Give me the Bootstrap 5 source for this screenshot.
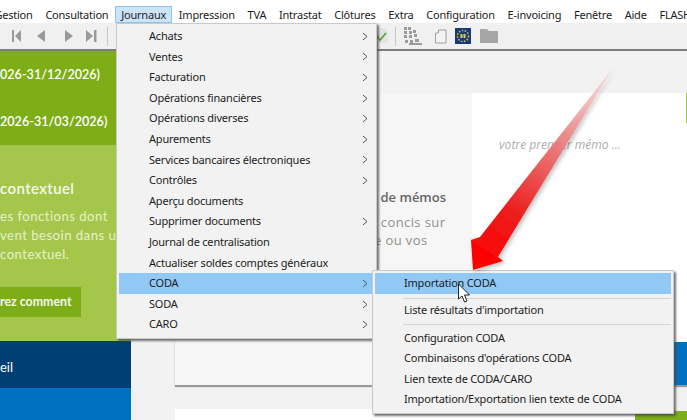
<!DOCTYPE html>
<html lang="fr">
<head>
<meta charset="utf-8">
<title>CODA</title>
<link href="https://cdn.jsdelivr.net/npm/bootstrap@5.3.0/dist/css/bootstrap.min.css" rel="stylesheet">
<style>
html,body{height:420px;overflow:hidden}
body{background:#f2f2f2;font-family:"Noto Sans","Open Sans",sans-serif;color:#1c1c1c;position:relative;width:687px}
.topmenu{height:23px;background:#fff;font-size:11px;letter-spacing:-.22px;white-space:nowrap;overflow:hidden;padding-left:0}
.topmenu span{display:block;height:17px;line-height:17px;margin-top:6px;padding:0 6.4px;flex:none}
.topmenu span:first-child{margin-left:-12px}
.topmenu span.act{background:#cce4f7;box-shadow:inset 0 0 0 1px #8fc4ee}
.tools{height:28px;background:#f0f0f0;border-bottom:2px solid #7d7d7d}
.tools svg{display:block}
.stage{height:369px}
.side{width:131px;flex:none;color:#fff;font-family:"Lato","Open Sans",sans-serif}
.gdark{background:#7dad17;height:94px;font-size:12.6px;font-weight:600;white-space:nowrap;overflow:hidden}
.gdark div{height:47px;padding-top:15px;line-height:18px}
.glight{background:#a4c64b;height:196px;color:#e7f0cd;font-size:13.2px;line-height:19px;white-space:nowrap;overflow:hidden}
.ctx{font-size:15px;font-weight:600;color:#f5f9ea;padding-top:33px;margin-bottom:9px;line-height:20px;letter-spacing:.4px}
.ctxline{letter-spacing:.45px}
.gbtn{display:inline-block;background:#7dad17;color:#f4f8e8;font-weight:700;font-size:12.4px;line-height:29px;height:30px;width:81px;margin-top:23px}
.bdark{background:#003f76;height:47px;line-height:52px;font-size:13px}
.bmid{background:#0071c1;flex:1}
.workarea{padding:42px 0 0 44px;flex:1;min-width:0}
.memo{height:292px;box-shadow:0 2px 1px #9a9a9a}
.memoleft{width:297px;background:#f6f6f6;color:#8f8f8f;padding:94px 0 0 197px;white-space:nowrap;font-family:"Open Sans",sans-serif}
.memohead{font-size:13px;font-weight:600;color:#666;line-height:20px;margin-bottom:6px}
.memotxt{font-size:13px;letter-spacing:.4px;line-height:18px}
.memotxt.inset{padding-left:2px}
.memoright{background:#fff;flex:1;min-width:0}
.memoph{font-family:"Open Sans",sans-serif;font-style:italic;font-size:12.1px;color:#adadad;padding:43px 0 0 27px;white-space:nowrap;line-height:18px}
.edgeg{width:1px;height:30px;background:#a4c64b}
.edgeb{width:14px;height:43px;background:#0071c1}
.lowrow{margin-top:24px;height:20px}
.lowcard{width:460px;background:#fff}
.lowg{background:#7dad17;margin-top:2px;flex:1}
.pop{position:absolute;background:#f2f2f2;border:1px solid #c9c9c9;box-shadow:2px 2px 2px rgba(70,70,70,.75);font-size:11px;letter-spacing:-.2px;padding:2px;white-space:nowrap}
.pop1{left:116px;top:23px;width:261px;height:316px}
.pop2{left:372px;top:270px;width:302px;height:144px}
.mi{display:flex;align-items:center;justify-content:space-between;height:20.6px;line-height:20.6px;padding:0 6px 0 30px}
.pop2 .mi{padding-left:29px}
.mi.hot{background:#90c8f6}
.mi svg{display:block}
.msep{height:1px;background:#d4d4d4;margin:4px 0 1px 28px}
.msep.wide{margin-bottom:2.500px}
.overlay{position:absolute;left:0;top:0;pointer-events:none}
</style>
</head>
<body>
<div class="topmenu d-flex">
<span>Gestion</span><span>Consultation</span><span class="act">Journaux</span><span>Impression</span><span>TVA</span><span>Intrastat</span><span>Clôtures</span><span>Extra</span><span>Configuration</span><span>E-invoicing</span><span>Fenêtre</span><span>Aide</span><span>FLASH</span>
</div>
<div class="tools">
<svg width="687" height="26" viewBox="0 0 687 26">
<g fill="#9a9a9a">
<rect x="12" y="7" width="2" height="12"/><path d="M21 7v12l-6-6z"/>
<path d="M45 7v12l-8-6z"/>
<path d="M65 7v12l8-6z"/>
<path d="M86 7v12l7-6z"/><rect x="94" y="7" width="2.500" height="12"/>
</g>
<rect x="107" y="4" width="1" height="19" fill="#c4c4c4"/>
<path d="M377 5h8l3 4v11h-11z" fill="#e4e4e4"/>
<path d="M377 13l3 4 6-7" fill="none" stroke="#5da53c" stroke-width="1.800"/>
<rect x="395" y="4" width="1" height="19" fill="#c4c4c4"/>
<g fill="#9b9b9b"><rect x="404" y="4" width="3" height="3"/><rect x="408" y="4" width="3" height="3"/><rect x="404" y="8" width="3" height="3"/><rect x="409" y="8" width="3" height="3"/><rect x="413" y="7" width="3" height="3"/><rect x="404" y="12" width="3" height="3"/><rect x="409" y="12" width="3" height="3"/><rect x="414" y="11" width="3" height="3"/><rect x="405" y="17" width="3" height="3"/><rect x="410" y="17" width="3" height="3"/><rect x="415" y="16" width="4" height="3"/><rect x="409" y="20" width="13" height="2"/></g>
<path d="M435.500 10h3v-3h7.500v13h-10.500z" fill="#f3f3f3" stroke="#a0a0a0"/>
<rect x="455" y="5" width="16" height="16" fill="#173a78"/>
<circle cx="463" cy="13" r="5.500" fill="none" stroke="#d9c13b" stroke-width="1.500" stroke-dasharray="1.500 1.500"/>
<rect x="460.500" y="11" width="2" height="4" fill="#e6d24a"/><rect x="463.500" y="11" width="2" height="4" fill="#e6d24a"/>
<path d="M480 6h7l2 2h9v12h-18z" fill="#a6a6a6"/>
</svg>
</div>
<div class="stage d-flex">
<div class="side d-flex flex-column">
<div class="gdark"><div>026-31/12/2026)</div><div>2026-31/03/2026)</div></div>
<div class="glight">
<div class="ctx">contextuel</div>
<div class="ctxline">es fonctions dont</div>
<div class="ctxline">vent besoin dans un</div>
<div class="ctxline">contextuel.</div>
<div class="gbtn">rez comment</div>
</div>
<div class="bdark">eil</div>
<div class="bmid"></div>
</div>
<div class="workarea">
<div class="memo d-flex">
<div class="memoleft">
<div class="memohead">t de mémos</div>
<div class="memotxt">t concis sur</div>
<div class="memotxt inset">e ou vos</div>
</div>
<div class="memoright d-flex">
<div class="memoph flex-grow-1">votre premier mémo ...</div>
<div class="d-flex flex-column justify-content-between align-items-end">
<div class="edgeg"></div>
<div class="edgeb"></div>
</div>
</div>
</div>
<div class="lowrow d-flex">
<div class="lowcard"></div>
<div class="lowg"></div>
</div>
</div>
</div>

<div class="pop pop1">
<div class="mi"><span>Achats</span><svg width="6" height="9" viewBox="0 0 6 9"><path d="M1 1l4 3.500-4 3.500" fill="none" stroke="#555"/></svg></div>
<div class="mi"><span>Ventes</span><svg width="6" height="9" viewBox="0 0 6 9"><path d="M1 1l4 3.500-4 3.500" fill="none" stroke="#555"/></svg></div>
<div class="mi"><span>Facturation</span><svg width="6" height="9" viewBox="0 0 6 9"><path d="M1 1l4 3.500-4 3.500" fill="none" stroke="#555"/></svg></div>
<div class="mi"><span>Opérations financières</span><svg width="6" height="9" viewBox="0 0 6 9"><path d="M1 1l4 3.500-4 3.500" fill="none" stroke="#555"/></svg></div>
<div class="mi"><span>Opérations diverses</span><svg width="6" height="9" viewBox="0 0 6 9"><path d="M1 1l4 3.500-4 3.500" fill="none" stroke="#555"/></svg></div>
<div class="mi"><span>Apurements</span><svg width="6" height="9" viewBox="0 0 6 9"><path d="M1 1l4 3.500-4 3.500" fill="none" stroke="#555"/></svg></div>
<div class="mi"><span>Services bancaires électroniques</span><svg width="6" height="9" viewBox="0 0 6 9"><path d="M1 1l4 3.500-4 3.500" fill="none" stroke="#555"/></svg></div>
<div class="mi"><span>Contrôles</span><svg width="6" height="9" viewBox="0 0 6 9"><path d="M1 1l4 3.500-4 3.500" fill="none" stroke="#555"/></svg></div>
<div class="mi"><span>Aperçu documents</span></div>
<div class="mi"><span>Supprimer documents</span><svg width="6" height="9" viewBox="0 0 6 9"><path d="M1 1l4 3.500-4 3.500" fill="none" stroke="#555"/></svg></div>
<div class="mi"><span>Journal de centralisation</span></div>
<div class="mi"><span>Actualiser soldes comptes généraux</span></div>
<div class="mi hot"><span>CODA</span><svg width="6" height="9" viewBox="0 0 6 9"><path d="M1 1l4 3.500-4 3.500" fill="none" stroke="#555"/></svg></div>
<div class="mi"><span>SODA</span><svg width="6" height="9" viewBox="0 0 6 9"><path d="M1 1l4 3.500-4 3.500" fill="none" stroke="#555"/></svg></div>
<div class="mi"><span>CARO</span><svg width="6" height="9" viewBox="0 0 6 9"><path d="M1 1l4 3.500-4 3.500" fill="none" stroke="#555"/></svg></div>
</div>

<div class="pop pop2">
<div class="mi hot"><span>Importation CODA</span></div>
<div class="msep"></div>
<div class="mi"><span>Liste résultats d'importation</span></div>
<div class="msep wide"></div>
<div class="mi"><span>Configuration CODA</span></div>
<div class="mi"><span>Combinaisons d'opérations CODA</span></div>
<div class="mi"><span>Lien texte de CODA/CARO</span></div>
<div class="mi"><span>Importation/Exportation lien texte de CODA</span></div>
</div>

<svg class="overlay" width="687" height="420" viewBox="0 0 687 420">
<defs>
<linearGradient id="arrowg" gradientUnits="userSpaceOnUse" x1="613" y1="68" x2="480" y2="262">
<stop offset="0" stop-color="#f6c8c8" stop-opacity=".5"/>
<stop offset=".35" stop-color="#ea8c8c"/>
<stop offset=".75" stop-color="#ec1d1d"/>
<stop offset="1" stop-color="#ff0000"/>
</linearGradient>
<filter id="arrows" x="-10%" y="-10%" width="120%" height="120%"><feDropShadow dx="2" dy="2" stdDeviation="2" flood-color="#000" flood-opacity=".25"/></filter>
</defs>
<path d="M613 68L480 237 471 240 473 270 503 261 498 257z" fill="url(#arrowg)" filter="url(#arrows)"/>
<path d="M458.500 284v15l3.500-3 2.500 6 2.500-1-2.500-6h5z" fill="#fff" stroke="#222" stroke-width="1"/>
</svg>
<script src="https://cdn.jsdelivr.net/npm/bootstrap@5.3.0/dist/js/bootstrap.bundle.min.js"></script>
</body>
</html>
